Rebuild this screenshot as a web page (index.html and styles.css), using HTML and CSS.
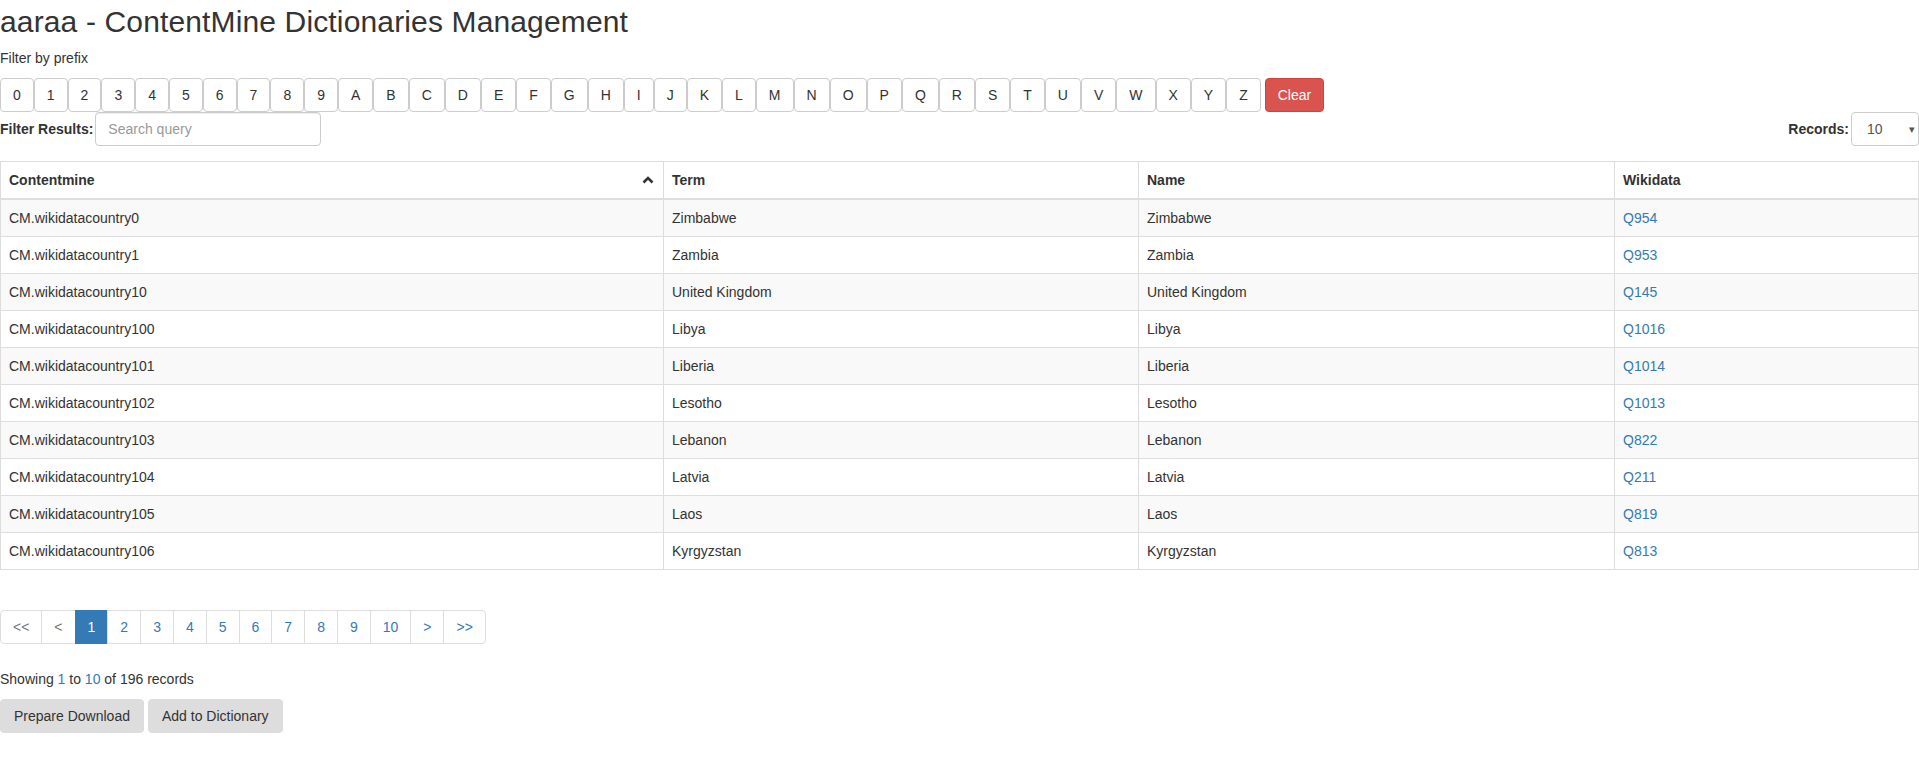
FILE: index.html
```html
<!DOCTYPE html>
<html lang="en">
<head>
<meta charset="utf-8">
<title>aaraa - ContentMine Dictionaries Management</title>
<link rel="stylesheet" href="styles.css">
</head>
<body>
<h2 class="title">aaraa - ContentMine Dictionaries Management</h2>
<p class="hint">Filter by prefix</p>
<div class="prefix-bar">
  <button class="btn">0</button><button class="btn">1</button><button class="btn">2</button><button class="btn">3</button><button class="btn">4</button><button class="btn">5</button><button class="btn">6</button><button class="btn">7</button><button class="btn">8</button><button class="btn">9</button><button class="btn">A</button><button class="btn">B</button><button class="btn">C</button><button class="btn">D</button><button class="btn">E</button><button class="btn">F</button><button class="btn">G</button><button class="btn">H</button><button class="btn">I</button><button class="btn">J</button><button class="btn">K</button><button class="btn">L</button><button class="btn">M</button><button class="btn">N</button><button class="btn">O</button><button class="btn">P</button><button class="btn">Q</button><button class="btn">R</button><button class="btn">S</button><button class="btn">T</button><button class="btn">U</button><button class="btn">V</button><button class="btn">W</button><button class="btn">X</button><button class="btn">Y</button><button class="btn">Z</button>
  <button class="btn btn-danger">Clear</button>
</div>
<div class="filter-row">
  <div class="filter-left">
    <label class="lbl">Filter Results:</label>
    <input class="form-control search" type="text" placeholder="Search query">
  </div>
  <div class="filter-right">
    <label class="lbl">Records:</label>
    <div class="select-wrap">
      <select class="records"><option>10</option><option>25</option><option>50</option></select>
      <span class="caret">&#9662;</span>
    </div>
  </div>
</div>
<table class="grid">
  <colgroup><col class="c1"><col class="c2"><col class="c3"><col class="c4"></colgroup>
  <thead>
    <tr>
      <th><div class="th-sort"><span>Contentmine</span><svg class="chev" width="12" height="8" viewBox="0 0 12 8"><path d="M1.5 6.5 L6 2 L10.5 6.5" fill="none" stroke="#333" stroke-width="2.6"/></svg></div></th>
      <th>Term</th>
      <th>Name</th>
      <th>Wikidata</th>
    </tr>
  </thead>
  <tbody>
    <tr><td>CM.wikidatacountry0</td><td>Zimbabwe</td><td>Zimbabwe</td><td><a href="#">Q954</a></td></tr>
    <tr><td>CM.wikidatacountry1</td><td>Zambia</td><td>Zambia</td><td><a href="#">Q953</a></td></tr>
    <tr><td>CM.wikidatacountry10</td><td>United Kingdom</td><td>United Kingdom</td><td><a href="#">Q145</a></td></tr>
    <tr><td>CM.wikidatacountry100</td><td>Libya</td><td>Libya</td><td><a href="#">Q1016</a></td></tr>
    <tr><td>CM.wikidatacountry101</td><td>Liberia</td><td>Liberia</td><td><a href="#">Q1014</a></td></tr>
    <tr><td>CM.wikidatacountry102</td><td>Lesotho</td><td>Lesotho</td><td><a href="#">Q1013</a></td></tr>
    <tr><td>CM.wikidatacountry103</td><td>Lebanon</td><td>Lebanon</td><td><a href="#">Q822</a></td></tr>
    <tr><td>CM.wikidatacountry104</td><td>Latvia</td><td>Latvia</td><td><a href="#">Q211</a></td></tr>
    <tr><td>CM.wikidatacountry105</td><td>Laos</td><td>Laos</td><td><a href="#">Q819</a></td></tr>
    <tr><td>CM.wikidatacountry106</td><td>Kyrgyzstan</td><td>Kyrgyzstan</td><td><a href="#">Q813</a></td></tr>
  </tbody>
</table>
<ul class="pagination">
  <li class="disabled"><a href="#">&lt;&lt;</a></li>
  <li class="disabled"><a href="#">&lt;</a></li>
  <li class="active"><a href="#">1</a></li>
  <li><a href="#">2</a></li>
  <li><a href="#">3</a></li>
  <li><a href="#">4</a></li>
  <li><a href="#">5</a></li>
  <li><a href="#">6</a></li>
  <li><a href="#">7</a></li>
  <li><a href="#">8</a></li>
  <li><a href="#">9</a></li>
  <li><a href="#">10</a></li>
  <li><a href="#">&gt;</a></li>
  <li><a href="#">&gt;&gt;</a></li>
</ul>
<p class="showing">Showing <span class="num">1</span> to <span class="num">10</span> of 196 records</p>
<div class="actions">
  <button class="btn btn-grey">Prepare Download</button>
  <button class="btn btn-grey">Add to Dictionary</button>
</div>
</body>
</html>
```

FILE: styles.css
```css
html, body {
  margin: 0;
  padding: 0;
  background: #fff;
}
body {
  font-family: "Liberation Sans", Arial, sans-serif;
  font-size: 14px;
  line-height: 20px;
  color: #333;
}
.title {
  font-size: 30px;
  font-weight: 500;
  line-height: 33px;
  letter-spacing: 0.14px;
  margin: 5px 0 10px;
  color: #333;
}
.hint {
  margin: 0 0 10px;
}
.prefix-bar {
  display: flex;
  align-items: flex-start;
}
.btn {
  font-family: inherit;
  font-size: 14px;
  line-height: 20px;
  padding: 6px 12px;
  border: 1px solid #ccc;
  border-radius: 4px;
  background: #fff;
  color: #333;
  cursor: pointer;
  margin: 0;
}
.btn-danger {
  background: #d9534f;
  border-color: #d43f3a;
  color: #fff;
  margin-left: 4px;
}
.filter-row {
  display: flex;
  justify-content: space-between;
  align-items: center;
  margin-bottom: 15px;
}
.filter-left, .filter-right {
  display: flex;
  align-items: center;
}
.lbl {
  font-weight: 700;
  margin-right: 2px;
}
.form-control {
  box-sizing: border-box;
  height: 34px;
  padding: 6px 12px;
  font-family: inherit;
  font-size: 14px;
  color: #555;
  border: 1px solid #ccc;
  border-radius: 4px;
  box-shadow: inset 0 1px 1px rgba(0,0,0,.075);
  background: #fff;
}
.search {
  width: 226px;
}
.search::placeholder {
  color: #999;
}
.select-wrap {
  position: relative;
}
.records {
  appearance: none;
  -webkit-appearance: none;
  box-sizing: border-box;
  width: 68px;
  height: 34px;
  padding: 6px 12px 6px 15px;
  font-family: inherit;
  font-size: 14px;
  color: #555;
  border: 1px solid #ccc;
  border-radius: 4px;
  background: #fff;
}
.caret {
  position: absolute;
  right: 4px;
  top: 7px;
  font-size: 11px;
  color: #555;
  pointer-events: none;
}
.grid {
  width: 100%;
  border-collapse: collapse;
  table-layout: fixed;
  margin-bottom: 40px;
}
.c1 { width: 663px; }
.c2 { width: 475px; }
.c3 { width: 476px; }
.grid th, .grid td {
  border: 1px solid #ddd;
  padding: 8px;
  text-align: left;
  line-height: 20px;
  vertical-align: top;
}
.grid th {
  font-weight: 700;
  vertical-align: bottom;
  border-bottom: 2px solid #ddd;
}
.grid tbody tr:nth-child(odd) {
  background: #f9f9f9;
}
.th-sort {
  display: flex;
  justify-content: space-between;
  align-items: center;
}
.chev {
  margin-right: 1px;
}
.grid a {
  color: #337ab7;
  text-decoration: none;
}
.pagination {
  display: flex;
  list-style: none;
  padding: 0;
  margin: 0 0 25px;
}
.pagination li a {
  display: block;
  padding: 6px 12px;
  line-height: 20px;
  border: 1px solid #ddd;
  margin-left: -1px;
  color: #337ab7;
  text-decoration: none;
  background: #fff;
}
.pagination li:first-child a {
  margin-left: 0;
  border-radius: 4px 0 0 4px;
}
.pagination li:last-child a {
  border-radius: 0 4px 4px 0;
}
.pagination li.disabled a {
  color: #777;
}
.pagination li.active a {
  background: #337ab7;
  border-color: #337ab7;
  color: #fff;
}
.showing {
  margin: 0 0 10px;
}
.num {
  color: #337ab7;
}
.actions {
  display: flex;
  gap: 4px;
}
.btn-grey {
  background: #ddd;
  border-color: #ddd;
  color: #333;
  padding: 6px 13px;
}
```
